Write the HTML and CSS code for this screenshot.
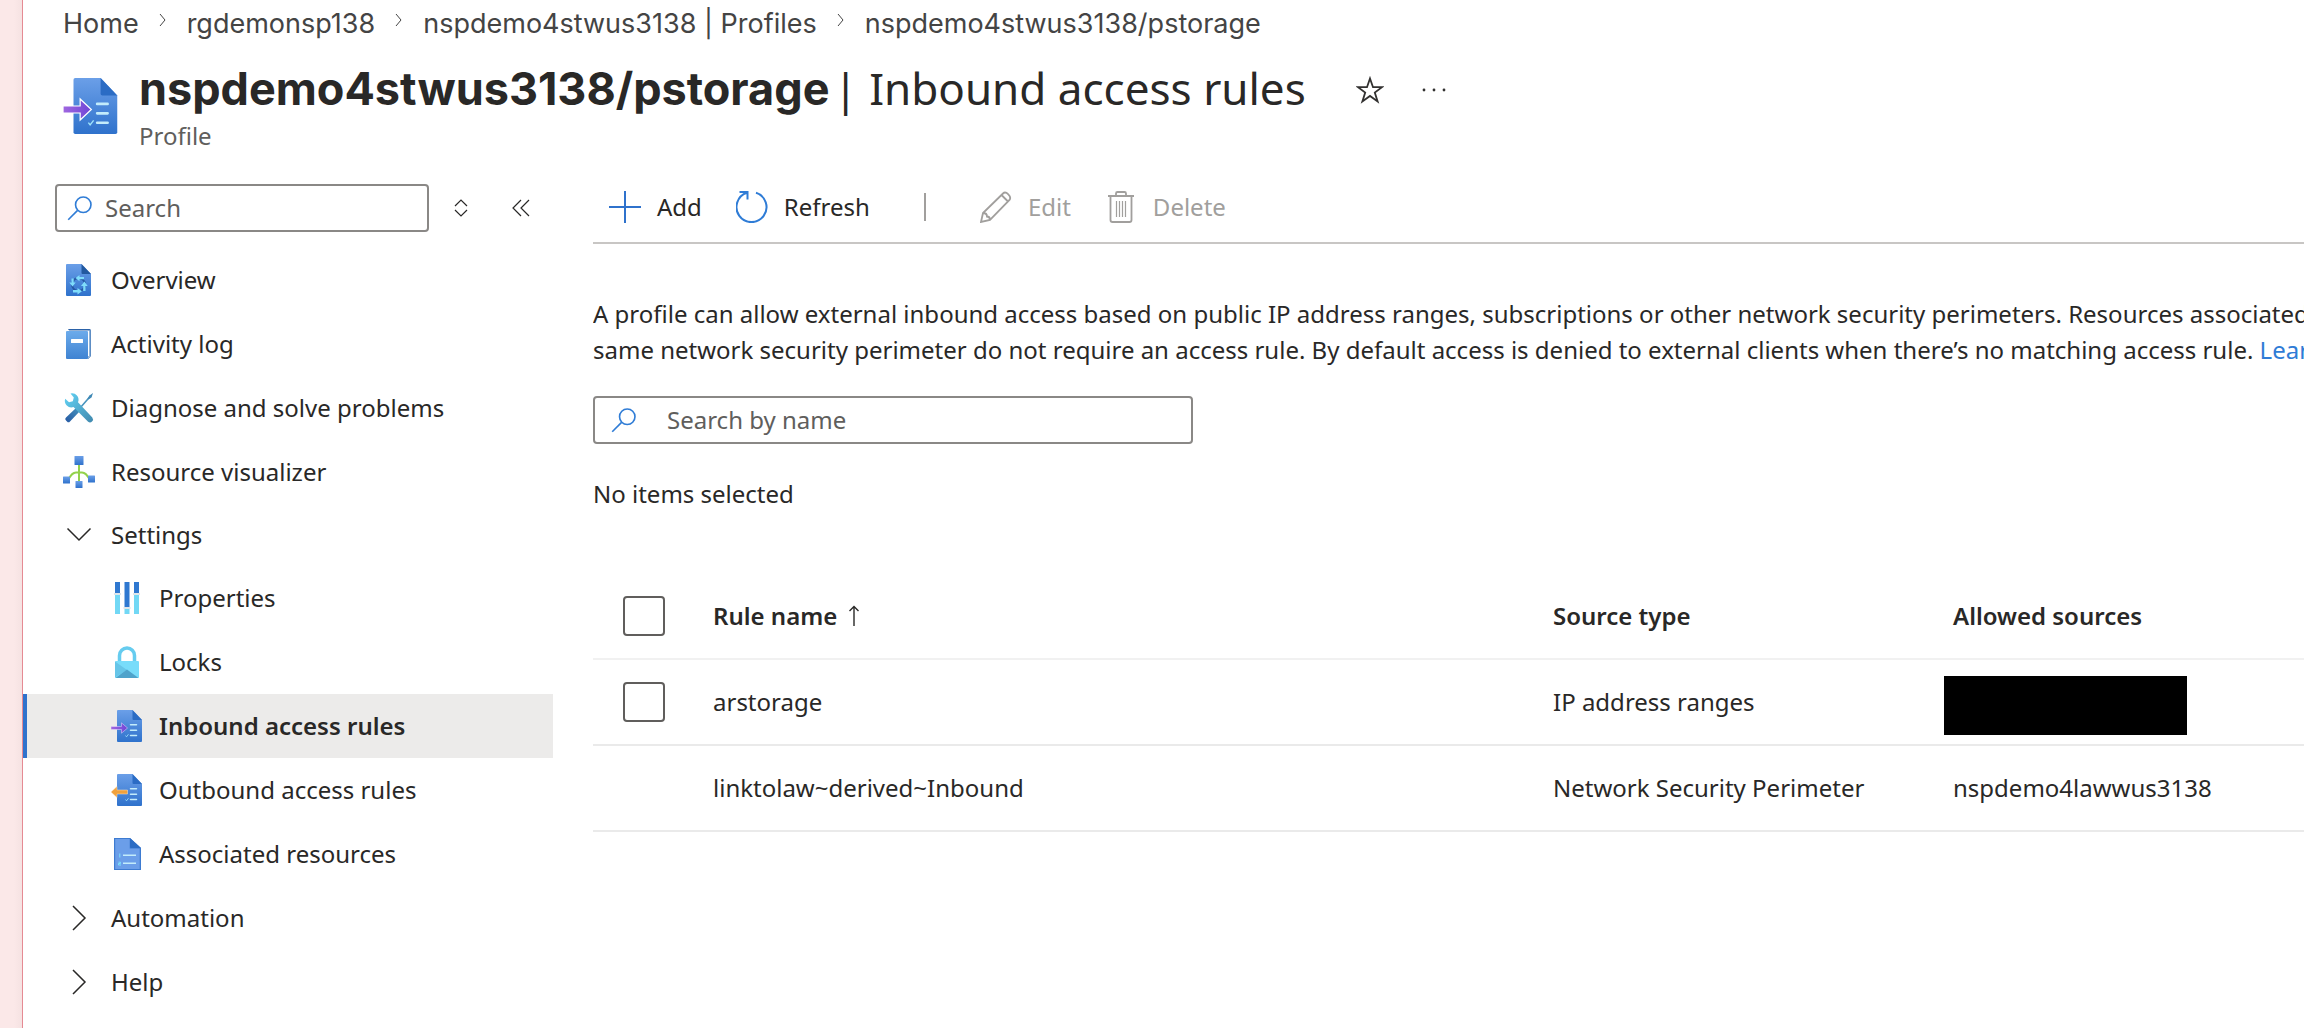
FILE: index.html
```
<!DOCTYPE html>
<html lang="en">
<head>
<meta charset="UTF-8" />
<meta name="viewport" content="width=device-width, initial-scale=1" />
<title>nspdemo4stwus3138/pstorage | Inbound access rules</title>
<link rel="stylesheet" href="styles.css">
</head>
<body>

<!-- shared gradients and icons -->
<svg class="defs" aria-hidden="true">
  <defs>
    <linearGradient id="gDoc" x1="0" y1="0" x2="0" y2="1"><stop offset="0" stop-color="#6b9fe8"/><stop offset="1" stop-color="#2f72cc"/></linearGradient>
    <linearGradient id="gPurple" x1="0" y1="0" x2="1" y2="0"><stop offset="0" stop-color="#a067e0"/><stop offset="1" stop-color="#6f45d6"/></linearGradient>
    <linearGradient id="gBook" x1="0" y1="0" x2="0" y2="1"><stop offset="0" stop-color="#6cabeb"/><stop offset="1" stop-color="#3f83d2"/></linearGradient>
    <linearGradient id="gWrench" x1="0" y1="0" x2="1" y2="1"><stop offset="0" stop-color="#62d3f5"/><stop offset="1" stop-color="#4189ae"/></linearGradient>
    <linearGradient id="gDriver" x1="1" y1="0" x2="0" y2="1"><stop offset="0" stop-color="#4693bd"/><stop offset="1" stop-color="#2558a3"/></linearGradient>
  </defs>
  <symbol id="doc-lines" viewBox="0 0 32 32">
    <path d="M7 0h14.500L31 10v21a1 1 0 0 1-1 1H7a1 1 0 0 1-1-1V1a1 1 0 0 1 1-1z" fill="url(#gDoc)"/>
    <path d="M21.500 0L31 10h-8.500a1 1 0 0 1-1-1z" fill="#2b6cc4"/>
    <path d="M19.500 14.800h6M19.500 20.200h6M19.500 25.600h6" stroke="#c3ecfb" stroke-width="1.500" stroke-linecap="round"/>
    <path d="M14.500 25.500l1 1.300 2-2.600" fill="none" stroke="#9fe4fb" stroke-width="0.800"/>
  </symbol>
  <symbol id="search" viewBox="0 0 32 32">
    <circle cx="20" cy="12" r="9.500" fill="none" stroke="#2f7cd6" stroke-width="2"/>
    <path d="M13 19L1.500 30.500" stroke="#2f7cd6" stroke-width="2"/>
  </symbol>
  <symbol id="chev" viewBox="0 0 16 16"><path d="M5 2l5 6-5 6" fill="none" stroke="currentColor"/></symbol>
</svg>

<div class="portal">
  <nav class="breadcrumb" aria-label="Breadcrumb">
    <a href="#">Home</a>
    <svg><use href="#chev"/></svg>
    <a href="#">rgdemonsp138</a>
    <svg><use href="#chev"/></svg>
    <a href="#">nspdemo4stwus3138 | Profiles</a>
    <svg><use href="#chev"/></svg>
    <a href="#">nspdemo4stwus3138/pstorage</a>
  </nav>

  <header class="blade-header">
    <svg class="blade-icon" viewBox="0 0 32 32">
      <use href="#doc-lines"/>
      <path d="M0 16h9.800v-4l6.400 6-6.400 6v-4H0z" fill="url(#gPurple)" stroke="#fff" stroke-width="0.700"/>
    </svg>
    <div class="blade-titles">
      <h1><b>nspdemo4stwus3138/pstorage</b><span>| Inbound access rules</span></h1>
      <p>Profile</p>
    </div>
    <button class="icon-btn" aria-label="Add to favorites">
      <svg viewBox="0 0 28 28"><path d="M14 2.500l3 8.700h9l-7.200 5.300 2.800 8.900-7.600-5.500-7.600 5.500 2.800-8.900L2 11.200h9z" fill="none" stroke="#323130" stroke-width="1.800"/></svg>
    </button>
    <button class="icon-btn" aria-label="More">
      <svg viewBox="0 0 28 28"><g fill="#323130"><circle cx="4" cy="14" r="1.400"/><circle cx="14" cy="14" r="1.400"/><circle cx="24" cy="14" r="1.400"/></g></svg>
    </button>
  </header>

  <div class="blade">
    <aside class="sidebar">
      <div class="menu-tools">
        <label class="search-box menu-search">
          <svg><use href="#search"/></svg>
          <input type="text" placeholder="Search" aria-label="Search menu">
        </label>
        <button class="tool" aria-label="Expand or collapse all"><svg viewBox="0 0 20 20"><path d="M4 8l6-6 6 6M4 12l6 6 6-6" fill="none" stroke="currentColor" stroke-width="1.200"/></svg></button>
        <button class="tool" aria-label="Hide menu"><svg viewBox="0 0 20 20"><path d="M10 2L2 10l8 8M18 2l-8 8 8 8" fill="none" stroke="currentColor" stroke-width="1.200"/></svg></button>
      </div>

      <nav class="menu" aria-label="Resource menu">
        <a class="item" href="#">
          <svg viewBox="0 0 32 32">
            <path d="M4 0h14.500L28 10v21a1 1 0 0 1-1 1H4a1 1 0 0 1-1-1V1a1 1 0 0 1 1-1z" fill="url(#gDoc)"/>
            <path d="M18.500 0L28 10h-8.500a1 1 0 0 1-1-1z" fill="#23599f"/>
            <circle cx="15.500" cy="20.500" r="6.500" fill="none" stroke="#2558a3" stroke-width="2"/>
            <path d="M21 13v2.200h-4.500v2L12.500 14l4-3v2zM8.500 14.500h2.200v4h2L9.500 22.500 6.300 18.500h2.200zM10 26h4.500v-2l4.500 3.200-4.500 3.200v-2H10zM22.500 27h-2.300v-5H18l3.400-4.500L24.700 22h-2.200z" fill="#7fdcfb"/>
          </svg>
          Overview
        </a>
        <a class="item" href="#">
          <svg viewBox="0 0 32 32">
            <path d="M5 1h21.500a1.500 1.500 0 0 1 1.500 1.500V28l-3 3z" fill="#2b62a8"/>
            <path d="M5 2.500h21.500v25L25 29z" fill="#fff"/>
            <path d="M27 2v26l-2 2" fill="none" stroke="#8fb8df"/>
            <rect x="3" y="3" width="22" height="28" rx="1" fill="url(#gBook)"/>
            <rect x="8" y="11" width="12" height="4" rx="0.500" fill="#fff"/>
          </svg>
          Activity log
        </a>
        <a class="item" href="#">
          <svg viewBox="0 0 32 32">
            <path d="M28 3.500L17 16" stroke="#4693bd" stroke-width="1.600"/>
            <path d="M30 1l-1.500 4.500-3 2-1-1 2-3z" fill="#3f88b5"/>
            <path d="M13 16l3.500 3.500L7 29.500a2 2 0 0 1-3 0l-1-1a2 2 0 0 1 0-3z" fill="url(#gDriver)"/>
            <path d="M7.500 1.500a6.500 6.500 0 0 1 7.500 8.800L29.300 25.500a3 3 0 0 1-4.200 4.200L10.500 15a6.500 6.500 0 0 1-8.300-8.200l3.800 3.500 3.800-1 1-3.800z" fill="url(#gWrench)"/>
          </svg>
          Diagnose and solve problems
        </a>
        <a class="item" href="#">
          <svg viewBox="0 0 32 32">
            <path d="M16 8v20M5.500 23c3-5 4.500-6.500 7.500-6.500h6c3 0 4.500 1.500 7.500 6.500" fill="none" stroke="#93d24c" stroke-width="2"/>
            <rect x="11.500" y="0" width="9" height="9" rx="0.500" fill="url(#gDoc)"/>
            <rect x="0" y="20.500" width="7" height="7" rx="0.500" fill="url(#gDoc)"/>
            <rect x="12.500" y="25" width="7" height="7" rx="0.500" fill="url(#gDoc)"/>
            <rect x="25" y="19.500" width="7" height="7" rx="0.500" fill="url(#gDoc)"/>
          </svg>
          Resource visualizer
        </a>

        <button class="item group" aria-expanded="true">
          <svg viewBox="0 0 32 32"><path d="M4.500 9.500L16 21 27.500 9.500" fill="none" stroke="currentColor" stroke-width="1.500"/></svg>
          Settings
        </button>
        <a class="item sub" href="#">
          <svg viewBox="0 0 32 32">
            <g fill="#2f78d0"><rect x="4" y="0" width="5" height="12"/><rect x="13.500" y="0" width="5" height="26"/><rect x="23" y="0" width="5" height="12"/></g>
            <g fill="#72d8f5"><rect x="4" y="13" width="5" height="19"/><rect x="13.500" y="27" width="5" height="5"/><rect x="23" y="13" width="5" height="19"/></g>
            <path d="M3 12h7M12.500 26h7M22 12h7" stroke="#dfe6ea" stroke-width="2"/>
          </svg>
          Properties
        </a>
        <a class="item sub" href="#">
          <svg viewBox="0 0 32 32">
            <path d="M8.500 16V9.500a7.500 7.500 0 0 1 15 0V16" fill="none" stroke="#66ccef" stroke-width="3.500"/>
            <rect x="4" y="15" width="24" height="17" rx="1" fill="#78dcfa"/>
            <path d="M4 15.500L16 24 4 31.500z" fill="#66c5e8"/>
            <path d="M4.500 32L16 23.500 27.500 32z" fill="#4fa3cb"/>
          </svg>
          Locks
        </a>
        <a class="item sub active" href="#" aria-current="page">
          <svg viewBox="0 0 32 32">
            <use href="#doc-lines"/>
            <path d="M0 16.500h10.500v-3.700l6 5.200-6 5.200v-3.700H0z" fill="url(#gPurple)" stroke="#e9dcfa" stroke-width="0.500"/>
          </svg>
          Inbound access rules
        </a>
        <a class="item sub" href="#">
          <svg viewBox="0 0 32 32">
            <use href="#doc-lines"/>
            <path d="M16.500 16v4H6v3.500L0 18l6-5.500V16z" fill="#f0a13c" stroke="#fbe3c2" stroke-width="0.500"/>
          </svg>
          Outbound access rules
        </a>
        <a class="item sub" href="#">
          <svg viewBox="0 0 32 32">
            <path d="M3 0h16l11 10v22H3z" fill="#3d7bd1"/>
            <path d="M4.200 1h14.500v9.500h10V31H4.200z" fill="#6b9ee9"/>
            <path d="M19 0l11 10H20a1 1 0 0 1-1-1z" fill="#2b6cc4"/>
            <path d="M12 17.200h13M12 25.200h13" stroke="#c3ecfb" stroke-width="1.600"/>
            <path d="M8.800 15.500v4M7.500 24.200h2v1.300h-2v1.500h2.500" fill="none" stroke="#7fe0fb"/>
          </svg>
          Associated resources
        </a>
        <button class="item" aria-expanded="false">
          <svg viewBox="0 0 32 32"><path d="M10 4l12 12-12 12" fill="none" stroke="currentColor" stroke-width="1.500"/></svg>
          Automation
        </button>
        <button class="item" aria-expanded="false">
          <svg viewBox="0 0 32 32"><path d="M10 4l12 12-12 12" fill="none" stroke="currentColor" stroke-width="1.500"/></svg>
          Help
        </button>
      </nav>
    </aside>

    <main class="content">
      <div class="toolbar">
        <button class="cmd">
          <svg viewBox="0 0 32 32"><path d="M16 0v32M0 16h32" stroke="#2f72cc" stroke-width="2"/></svg>
          Add
        </button>
        <button class="cmd">
          <svg viewBox="0 0 32 32"><path d="M20 1.800A15 15 0 1 1 11 1.800M3.500 1h8v7.500" fill="none" stroke="#2f7cd6" stroke-width="2"/></svg>
          Refresh
        </button>
        <span class="divider"></span>
        <button class="cmd" disabled>
          <svg viewBox="0 0 32 32"><path d="M1 31l2-9L23 2.500c3-3 9 3 6.500 6.500L10 29zM21.500 4l6.500 6.500M3 22c3 0 4 1.500 4 3.500 2 0 3 1 3 3.500" fill="none" stroke="currentColor" stroke-width="1.800"/></svg>
          Edit
        </button>
        <button class="cmd" disabled>
          <svg viewBox="0 0 32 32"><path d="M3 5h26M11 5V2.500A1.500 1.500 0 0 1 12.500 1h7A1.500 1.500 0 0 1 21 2.500V5M5.500 5v24a2 2 0 0 0 2 2h17a2 2 0 0 0 2-2V5" fill="none" stroke="currentColor" stroke-width="1.800"/><path d="M11.500 10v16M14.500 10v16M17.500 10v16M20.500 10v16" stroke="currentColor" stroke-width="1.200"/></svg>
          Delete
        </button>
      </div>

      <p class="intro">A profile can allow external inbound access based on public IP address ranges, subscriptions or other network security perimeters. Resources associated with the<br>
      same network security perimeter do not require an access rule. By default access is denied to external clients when there’s no matching access rule. <a href="#">Learn more</a></p>

      <label class="search-box name-search">
        <svg><use href="#search"/></svg>
        <input type="text" placeholder="Search by name" aria-label="Search by name">
      </label>

      <p class="selection">No items selected</p>

      <table class="rules">
        <thead>
          <tr>
            <th class="col-check"><input type="checkbox" aria-label="Select all"></th>
            <th class="col-name">Rule name <svg viewBox="0 0 12 22"><path d="M6 21V1.500M1.500 6L6 1.500 10.500 6" fill="none" stroke="currentColor" stroke-width="1.400"/></svg></th>
            <th class="col-type">Source type</th>
            <th>Allowed sources</th>
          </tr>
        </thead>
        <tbody>
          <tr>
            <td class="col-check"><input type="checkbox" aria-label="Select arstorage"></td>
            <td>arstorage</td>
            <td>IP address ranges</td>
            <td class="hidden-cell"><span class="hidden-value"></span></td>
          </tr>
          <tr>
            <td class="col-check"></td>
            <td>linktolaw~derived~Inbound</td>
            <td>Network Security Perimeter</td>
            <td>nspdemo4lawwus3138</td>
          </tr>
        </tbody>
      </table>
    </main>
  </div>
</div>

</body>
</html>
```

FILE: styles.css
```
* {
  box-sizing: border-box;
}
body {
  margin: 0;
  padding-left: 22px;
  min-height: 100vh;
  background: linear-gradient(90deg, #fbe8e8 14px, #f5e2e2 22px);
  font-family: "Segoe UI", "Noto Sans", sans-serif;
  font-size: 24px;
  line-height: 36px;
  color: #292827;
  overflow: hidden;
}
h1, p {
  margin: 0;
}
a {
  color: inherit;
  text-decoration: none;
}
button {
  padding: 0;
  border: none;
  background: none;
  font: inherit;
  color: inherit;
  cursor: pointer;
}
svg {
  flex: none;
  display: block;
}
.defs {
  position: absolute;
  width: 0;
  height: 0;
}
.portal {
  min-height: 100vh;
  border-left: 1px solid #e58a93;
  background: #fff;
}

/* breadcrumb */
.breadcrumb {
  display: flex;
  align-items: center;
  gap: 16px;
  height: 48px;
  padding-left: 40px;
  font-family: Inter, sans-serif;
  font-size: 27px;
  color: #444;
  white-space: nowrap;
}
.breadcrumb svg {
  width: 16px;
  height: 16px;
  margin-bottom: 8px;
}

/* blade header */
.blade-header {
  display: flex;
  align-items: flex-start;
  height: 136px;
  padding: 10px 0 0 40px;
}
.blade-icon {
  width: 56px;
  height: 56px;
  margin: 20px 20px 0 0;
}
.blade-titles {
  margin-right: 50px;
  white-space: nowrap;
}
.blade-titles h1 {
  font-size: 44px;
  font-weight: 400;
  line-height: 60px;
}
.blade-titles b {
  margin-right: 4px;
  font-family: Inter, sans-serif;
  font-size: 45px;
  font-weight: 700;
}
.blade-titles p {
  line-height: 34px;
  color: #605e5c;
}
.icon-btn {
  margin: 18px 36px 0 0;
}
.icon-btn svg {
  width: 28px;
  height: 28px;
}

.blade {
  display: flex;
}

/* sidebar */
.sidebar {
  flex: none;
  width: 530px;
}
.menu-tools {
  display: flex;
  align-items: center;
  height: 48px;
  margin-bottom: 16px;
  padding-left: 32px;
}
.search-box {
  display: flex;
  align-items: center;
  height: 48px;
  border: 2px solid #8a8886;
  border-radius: 4px;
  background: #fff;
}
.search-box svg {
  width: 26px;
  height: 26px;
}
.search-box input {
  flex: 1;
  min-width: 0;
  padding: 0;
  border: none;
  outline: none;
  background: none;
  font: inherit;
}
.search-box input::placeholder {
  color: #605e5c;
  opacity: 1;
}
.menu-search {
  width: 374px;
  padding-left: 10px;
  gap: 12px;
}
.tool {
  margin-left: 22px;
}
.tool + .tool {
  margin-left: 40px;
}
.tool svg {
  width: 20px;
  height: 20px;
}
.item {
  display: flex;
  align-items: center;
  gap: 16px;
  width: 100%;
  height: 64px;
  padding-left: 40px;
}
.item svg {
  width: 32px;
  height: 32px;
}
.group {
  height: 62px;
}
.sub {
  padding-left: 88px;
}
.active {
  border-left: 4px solid #2f72cc;
  padding-left: 84px;
  background: #ecebea;
  font-weight: 600;
}

/* content */
.content {
  flex: 1;
  min-width: 0;
  margin-left: 40px;
}
.toolbar {
  display: flex;
  align-items: center;
  gap: 34px;
  height: 60px;
  padding: 0 0 12px 16px;
  border-bottom: 2px solid #c8c6c4;
}
.cmd {
  display: flex;
  align-items: center;
  gap: 16px;
}
.cmd svg {
  width: 32px;
  height: 32px;
}
.cmd:disabled {
  color: #a19f9d;
}
.divider {
  width: 2px;
  height: 28px;
  margin: 0 20px;
  background: #a19f9d;
}
.intro {
  margin-top: 52px;
  overflow: hidden;
  white-space: nowrap;
}
.intro a {
  color: #2f7cd6;
}
.name-search {
  width: 600px;
  margin-top: 28px;
  padding-left: 16px;
  gap: 30px;
}
.selection {
  margin: 32px 0 61px;
}

/* rules table */
.rules {
  width: 100%;
  table-layout: fixed;
  border-collapse: collapse;
}
.rules th, .rules td {
  height: 86px;
  padding: 0 0 0 9px;
  border-bottom: 2px solid #eaeaea;
  text-align: left;
  vertical-align: middle;
  white-space: nowrap;
}
.rules th {
  border-color: #f1f1f1;
  font-weight: 600;
}
.rules th svg {
  display: inline-block;
  width: 12px;
  height: 22px;
  margin-left: 4px;
  vertical-align: -2px;
}
.rules .col-check {
  width: 111px;
  padding-left: 30px;
}
.col-name {
  width: 840px;
}
.col-type {
  width: 400px;
}
.rules input {
  appearance: none;
  display: block;
  width: 42px;
  height: 40px;
  margin: 0;
  border: 2px solid #605e5c;
  border-radius: 4px;
  background: #fff;
}
.rules .hidden-cell {
  padding: 6px 0 0;
}
.hidden-value {
  display: block;
  width: 243px;
  height: 59px;
  background: #000;
}
```
